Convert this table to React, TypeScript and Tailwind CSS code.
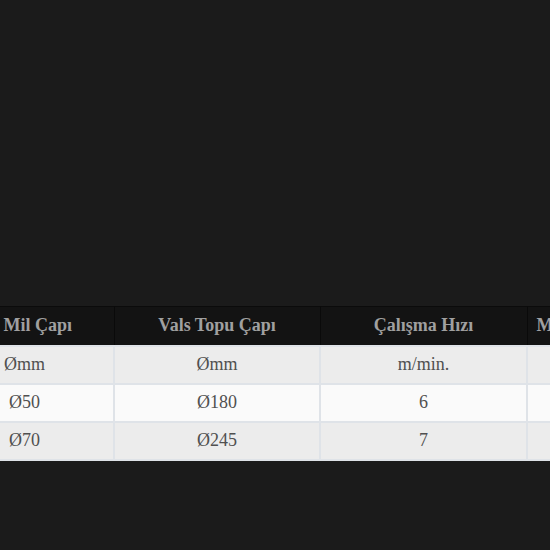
import React from "react";

const headers = ["Ana Mil Çapı", "Vals Topu Çapı", "Çalışma Hızı", "Motor Gücü"];
const rows = [
  ["Ømm", "Ømm", "m/min.", "kW"],
  ["Ø50", "Ø180", "6", "4"],
  ["Ø70", "Ø245", "7", "5.5"],
];

export default function App() {
  return (
    <div className="w-[550px] h-[550px] bg-[#1b1b1b] overflow-hidden pt-[306px]" style={{ fontFamily: '"Liberation Serif", serif' }}>
      <table className="ml-[-66px] border-collapse table-fixed w-[706px]">
        <colgroup>
          <col className="w-[179px]" />
          <col className="w-[206px]" />
          <col className="w-[207px]" />
          <col className="w-[114px]" />
        </colgroup>
        <thead>
          <tr className="bg-[#131313] border-t border-[#0b0b0b]">
            {headers.map((h, i) => (
              <th
                key={i}
                className={`h-[39px] text-[18px] font-bold text-[#a0a0a0] text-center border-x border-[#0a0a0a] p-0 align-middle whitespace-nowrap ${i === 0 ? "pr-[10px]" : ""}`}
              >
                {h}
              </th>
            ))}
          </tr>
        </thead>
        <tbody>
          {rows.map((r, ri) => (
            <tr key={ri} className={ri === 1 ? "bg-[#fafafa]" : "bg-[#ececec]"}>
              {r.map((c, ci) => (
                <td key={ci} className="h-[38px] text-[18px] text-[#505050] text-center border-2 border-[#dfe3e8] p-0 align-middle whitespace-nowrap">
                  {c}
                </td>
              ))}
            </tr>
          ))}
        </tbody>
      </table>
    </div>
  );
}
